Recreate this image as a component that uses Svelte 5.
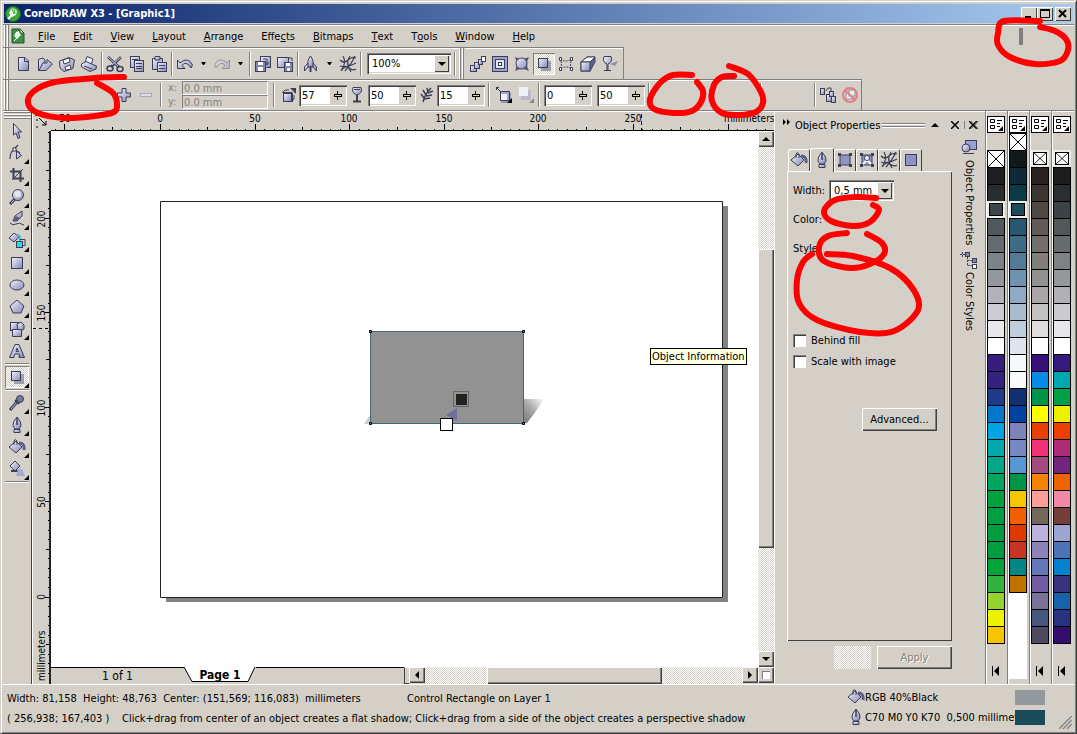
<script>
  // menu labels, split around the underlined access key
  const menus = [
    ['', 'F', 'ile'], ['', 'E', 'dit'], ['', 'V', 'iew'], ['', 'L', 'ayout'],
    ['', 'A', 'rrange'], ['Effe', 'c', 'ts'], ['', 'B', 'itmaps'], ['', 'T', 'ext'],
    ['T', 'o', 'ols'], ['', 'W', 'indow'], ['', 'H', 'elp']
  ];

  const defs = `
    <linearGradient id="steel" x1="0" y1="0" x2="1" y2="1">
      <stop offset="0" stop-color="#f4f5ff"/><stop offset="1" stop-color="#8286b4"/>
    </linearGradient>`;

  const S = 'stroke="#3c3e58" fill="url(#steel)"';
  const L = 'stroke="#3c3e58" fill="none"';

  const nib = `<path d="M9 1 L5.500 6 L5 10 L7 13 H11 L13 10 L12.500 6 Z" ${S}/><path d="M9 2 V9" ${L} stroke-width="1.500"/><path d="M6 13.500 H12 V16.500 H6 Z" ${S}/>`;
  const bucket = `<path d="M1 9 L8 3 L14 9 L8 15 Z" ${S}/><path d="M6 7 V3 Q7 0 9 3 V7" ${L}/><path d="M11 5 Q17 5 16 12" stroke="#5a5e8c" stroke-width="3" fill="none"/>`;
  const mesh = `<path d="M1 5 Q5 9 9 5 T17 3 M1 11 Q8 13 17 8 M2 16 Q6 10 10 13 T17 14 M4 1 Q8 7 2 16 M11 1 Q6 8 12 17 M16 1 Q13 8 6 16" ${L} stroke-width="1.200"/>`;
  const shadow = `<rect x="6" y="6" width="10" height="10" fill="#9d9dab"/><rect x="3.500" y="3.500" width="9" height="9" ${S}/>`;
  const glass = `<path d="M4 1.500 H12 Q14 7 8 9 Q2 7 4 1.500 Z" ${S}/><path d="M5 3.500 H11" ${L}/><path d="M8 9 V15" stroke="#3c3e58" stroke-width="2"/><path d="M4 15.500 H12" stroke="#3c3e58" stroke-width="2"/>`;

  const icons = {
    newDoc: `<path d="M4.500 2.500 H11 L14.500 6 V15.500 H4.500 Z" ${S}/><path d="M10.500 2.500 V6.500 H14.500" ${L}/>`,
    open: `<path d="M2.500 15.500 V4.500 L7 3 L9 5 V15.500 Z" ${S}/><path d="M3 15.500 L7 8 H11 V4.500 L16.500 9 L10 15.500 Z" ${S}/>`,
    save: `<path d="M1.500 6 L11 2.500 L16.500 5 L15 13.500 L6 16.500 L2 13 Z" ${S}/><path d="M5 5 L11 3 L12 7 L6 9 Z M7 12 L12 10 L13 14 L8 15 Z" fill="#fff" stroke="#3c3e58"/>`,
    print: `<path d="M5 8 L7 1.500 L13 4 L11 10 Z" fill="#f5f6ff" stroke="#3c3e58"/><path d="M1.500 9 L6 6.500 L16.500 11 L16 14 L10 16.500 L1.500 12 Z" ${S}/><path d="M4 11 L12 14" ${L}/>`,
    cut: `<path d="M2 2 L13 12 M15 2 L5 12" stroke="#3c3e58" stroke-width="2.500"/><path d="M2 2 L12 11 M15 2 L6 10" stroke="#c6c9e4" stroke-width="1"/><ellipse cx="4" cy="13.500" rx="3" ry="2.500" ${L} stroke-width="1.500"/><ellipse cx="14" cy="14" rx="3" ry="2.500" ${L} stroke-width="1.500"/>`,
    copy: `<rect x="2.500" y="1.500" width="9" height="11" ${S}/><path d="M4 4.500 H10" ${L}/><rect x="6.500" y="5.500" width="9" height="11" ${S}/><path d="M8 8.500 H14 M8 11.500 H14 M8 13.500 H14" ${L}/>`,
    paste: `<path d="M2.500 3.500 H12.500 V14.500 H2.500 Z" ${S}/><path d="M5 1.500 H10 V5 H5 Z" ${S}/><rect x="7.500" y="7.500" width="9" height="9" ${S}/><path d="M9 10.500 H15 M9 13.500 H15" ${L}/>`,
    undo: `<path d="M1.500 5 V13.500 H9 L6 10.500 Q10 5 15 13 L16.500 10 Q12 1 4 8 Z" ${S}/>`,
    redo: `<g opacity=".4"><path d="M16.500 5 V13.500 H9 L12 10.500 Q8 5 3 13 L1.500 10 Q6 1 14 8 Z" ${S}/></g>`,
    import: `<rect x="6.500" y="1.500" width="10" height="11" ${S}/><rect x="1.500" y="6.500" width="10" height="10" fill="#8387ab" stroke="#3c3e58"/><rect x="4" y="7" width="5" height="3" fill="#fff"/><rect x="4" y="12" width="5" height="4" fill="#fff"/><path d="M9 4 H13 V9 M11 7 L13 10 L15 7" ${L}/>`,
    export: `<rect x="1.500" y="2.500" width="11" height="10" ${S}/><rect x="8.500" y="7.500" width="8" height="9" fill="#8387ab" stroke="#3c3e58"/><rect x="10" y="8" width="4" height="3" fill="#fff"/><rect x="11" y="13" width="3" height="3" fill="#fff"/><path d="M12 3 H16 V6" ${L}/>`,
    launch: `<path d="M8.500 1 Q5 5 6 12 H11 Q12 5 8.500 1 Z" ${S}/><path d="M6 8 L2.500 12 V16 L6 12 Z M11 8 L14.500 12 V16 L11 12 Z" ${S}/><path d="M8.500 11 V17" stroke="#3c3e58" stroke-width="2"/>`,
    mesh,
    blend: `<rect x="1.500" y="10.500" width="6" height="6" ${S}/><rect x="5.500" y="7.500" width="5" height="6" ${S}/><rect x="9.500" y="4.500" width="4" height="5" ${S}/><rect x="12.500" y="1.500" width="4" height="5" fill="#fff" stroke="#3c3e58"/>`,
    contour: `<rect x="1.500" y="1.500" width="15" height="15" fill="#9da1c8" stroke="#3c3e58"/><rect x="4.500" y="4.500" width="9" height="9" fill="#dfe1f4" stroke="#3c3e58"/><rect x="7.500" y="7.500" width="3" height="3" fill="#fff" stroke="#3c3e58"/>`,
    distort: `<path d="M2 2 Q9 5 16 2 Q12 9 16 16 Q9 12 2 16 Q5 9 2 2 Z" fill="#50546f"/><circle cx="8.500" cy="8.500" r="5.500" ${S}/>`,
    shadow,
    envelope: `<path d="M3 4 Q9 8 15 4 Q12 9 15 14 Q9 10 3 14 Q6 9 3 4 Z" ${L} stroke-dasharray="2 1"/><path d="M2.500 2.500 h2 v3 h-2 Z M13.500 2.500 h2 v3 h-2 Z M2.500 12.500 h2 v3 h-2 Z M13.500 12.500 h2 v3 h-2 Z" fill="#fff" stroke="#3c3e58"/>`,
    extrude: `<path d="M2 7 L8 2 H16 V7 L11 16 H2 Z" fill="#5e6290" stroke="#3c3e58"/><path d="M2 7 L8 2 H16 L11 7 Z" fill="#fff" stroke="#3c3e58"/><rect x="2" y="7" width="9" height="9" ${S}/>`,
    transparency: `<path d="M9 9 L17 6 L14 11 Z" fill="#8d90a6"/><path d="M3 1.500 H10 Q12 7 7 9 V15.500 H10 H3 H6 V9 Q1 7 3 1.500 Z" ${S}/>`,
    plus: `<path d="M7 2.500 H11 V7 H15.500 V11 H11 V15.500 H7 V11 H2.500 V7 H7 Z" ${S}/>`,
    minus: `<rect x="3.500" y="7.500" width="11" height="3" fill="#dcddea" stroke="#a9aabd"/>`,
    opacity: `<rect x="3.500" y="7.500" width="8" height="8" ${S}/><path d="M2.500 6.500 L5 4 H9 M14 9 V13 L11.500 15.500" ${L}/><path d="M2.500 6.500 H12 M12.500 6.500 V16" ${L}/><path d="M10 2 H16 V8 Z" fill="#3c3e58"/>`,
    glass,
    feather: `<path d="M5 16 Q7 8 13 2 M6 12 L3 8 M8 9 L5 4 M10 6 L9 2 M6 13 L12 12 M8 10 L14 9 M10 7 L15 5" ${L} stroke-width="1.500"/>`,
    direction: `<rect x="6" y="7" width="10" height="10" fill="#9396b6"/><rect x="5.500" y="5.500" width="9" height="9" fill="#a3a7c6" stroke="#3c3e58"/><rect x="6" y="8" width="6" height="6" fill="#f0f1fb"/><path d="M1 1 L5 5 M1.500 4 V1.500 H4" ${L}/><path d="M17 12 V17 H12 Z" fill="#000"/>`,
    edges: `<rect x="2" y="1" width="9" height="9" fill="#eef0fa"/><path d="M11 4 H14 V14 H4 V10 H11 Z" fill="#b9bbcc"/><path d="M17 12 V17 H12 Z" fill="#888"/>`,
    copyFx: `<rect x="1.500" y="2.500" width="4" height="6" ${S}/><rect x="7.500" y="8.500" width="5" height="7" ${S}/><rect x="10.500" y="5.500" width="4" height="5" ${S}/><rect x="12.500" y="10.500" width="4" height="6" ${S}/><path d="M7 5 L9 2 H12 V5" ${L}/>`,
    clearFx: `<rect x="5" y="7" width="6" height="6" fill="#eee" stroke="#8a8ca0"/><rect x="8" y="4" width="6" height="6" fill="#eee" stroke="#8a8ca0"/><circle cx="9" cy="9" r="7" fill="none" stroke="#e57f82" stroke-width="2"/><path d="M4 4 L14 14" stroke="#e57f82" stroke-width="2"/>`,
    pick: `<path d="M5.500 1.500 V13 L8 11 L10 16.500 L12 15.500 L10 10 H13.500 Z" ${S}/>`,
    shape: `<path d="M2 15 Q2 7 7 5 M10 1 L6 5 L12 9" ${L} stroke-width="1.200"/><rect x="5" y="4" width="3" height="3" fill="#fff" stroke="#3c3e58"/><path d="M8.500 7 V15 L13.500 11.500 Z" ${S}/>`,
    crop: `<path d="M5.500 2 V12.500 H16 M2 5.500 H12.500 V16" ${L} stroke-width="2"/><path d="M4 14 L15 3" ${L}/>`,
    zoom: `<path d="M2 16 L7 11" stroke="#3c3e58" stroke-width="3"/><path d="M3 15 L6 12" stroke="#b9bcdd" stroke-width="1"/><circle cx="10" cy="7" r="5.500" ${S}/><circle cx="10" cy="6.500" r="3" fill="#fff" opacity=".6"/>`,
    freehand: `<path d="M5 11 L7 6 L14 1 L14 6 L9 11 Z" ${S}/><path d="M8 6 L12 8 L9 11 L5 11 Z" fill="#5a5e82"/><path d="M2 13 Q5 16 8 14 T16 15" ${L}/>`,
    smartFill: `<path d="M1 6 L6 1 L11 5 L6 10 Z" ${S}/><path d="M9 3 Q13 3 12 10" stroke="#2bc9da" stroke-width="2" fill="none"/><rect x="8.500" y="9.500" width="6" height="6" fill="#27dbe8" stroke="#3c3e58"/><path d="M11.500 7.500 H17 V13.500 H14" ${L}/>`,
    rect: `<rect x="3.500" y="3.500" width="11" height="11" ${S}/>`,
    ellipse: `<ellipse cx="9" cy="9" rx="7" ry="5" ${S}/>`,
    polygon: `<path d="M9 2 L16 8 L13 15 H5 L2 8 Z" ${S}/>`,
    shapes: `<rect x="2.500" y="2.500" width="8" height="8" ${S}/><path d="M9 4 L13 2 L16 5 V9 L13 11 H10 Z" ${S}/><path d="M4.500 9.500 H13.500 V16.500 H4.500 Z" ${S}/>`,
    text: `<path d="M1.500 15.500 L7 2.500 H11 L16.500 15.500 H11 V14 H12 L11 12 H7 L6 14 V15.500 Z M8 9.500 H10.500 L9 6 Z" ${S}/>`,
    dropper: `<path d="M2 16 L9 8" stroke="#3c3e58" stroke-width="3"/><path d="M3 15 L9 8" stroke="#bfc2df" stroke-width="1"/><circle cx="12" cy="5" r="3.500" fill="#777aa2" stroke="#3c3e58"/><path d="M7 6 L11 10" stroke="#3c3e58" stroke-width="2"/>`,
    nib,
    bucket,
    interFill: `<path d="M2 6 L7 1 L12 6 L7 11 Z" ${S}/><path d="M3 11 H10" ${L} stroke-width="2"/><path d="M10 9 L14 9 L17 16 H8 Z" fill="#a7abd2"/>`,
    propRect: `<rect x="4" y="4" width="10" height="10" fill="#8f93c6" stroke="#3c3e58"/><path d="M2 2 h3 v3 h-3 Z M13 2 h3 v3 h-3 Z M2 13 h3 v3 h-3 Z M13 13 h3 v3 h-3 Z" fill="#3c3e58"/>`,
    propCurve: `<rect x="4" y="4" width="10" height="10" fill="#8f93c6" stroke="#3c3e58"/><path d="M9 9 L13 13 M5 13 L9 9" stroke="#fff" stroke-width="2"/><circle cx="9" cy="7" r="2.500" fill="#fff" stroke="#3c3e58"/><path d="M2 2 h3 v3 h-3 Z M13 2 h3 v3 h-3 Z M2 13 h3 v3 h-3 Z M13 13 h3 v3 h-3 Z" fill="#3c3e58"/>`,
    propBox: `<rect x="3.500" y="3.500" width="11" height="11" fill="#8f93c6" stroke="#3c3e58"/>`,
    propSide: `<rect x="5.500" y="1.500" width="11" height="9" fill="#9da1d0" stroke="#3c3e58"/><circle cx="6" cy="9" r="4" ${S}/><path d="M3 14.500 H14" ${L}/>`,
    colorSide: `<path d="M0 3.500 H5 M2.500 1 V6 M7.500 6 V14.500 M7.500 9.500 H12 M7.500 14.500 H12" ${L} stroke-dasharray="2 1"/><rect x="5.500" y="1.500" width="4" height="4" fill="#7f83b4" stroke="#3c3e58"/><rect x="12.500" y="7.500" width="4" height="4" fill="#7f83b4" stroke="#3c3e58"/><rect x="12.500" y="13.500" width="4" height="4" fill="#fff" stroke="#3c3e58"/>`
  };

  const standard = [
    'newDoc', 'open', 'save', 'print', '|', 'cut', 'copy', 'paste', '|', 'undo', 'v', 'redo', 'v', '|',
    'import', 'export', '|', 'launch', 'v', 'mesh', '|'
  ];
  const effects = ['blend', 'contour', 'distort', 'shadow', 'envelope', 'extrude', 'transparency'];

  const tools = [
    'pick', 'shape', 'crop', 'zoom', 'freehand', 'smartFill', 'rect', 'ellipse', 'polygon', 'shapes', 'text',
    '-', 'shadow', '-', 'dropper', 'nib', 'bucket', 'interFill'
  ];
  const noFlyout = ['pick', 'text'];

  const tabs = ['bucket', 'nib', 'propRect', 'propCurve', 'mesh', 'propBox'];

  // 'x' is the empty "no colour" well
  const palettes = [
    { picked: 3, arrow: true, colors: 'x 1c1e20 2a2d30 3b4448 50585c 646c70 7d8287 93969b b0b1b9 cbccd3 e7e8ec fff 361d7e 33227e 1f3b88 0478cc 00a4e4 00a9a9 00a887 00a55f 00a23e 00a040 009d3f 009d3f 00a43a 33b240 93d22f eef200 fac300'.split(' ') },
    { picked: 4, arrow: false, colors: 'x 10191c 0f2a36 0d3a47 1b4a5b 285770 3f6b86 527c96 6f93ae 8eaac5 a7bccd bfcddc dfe5ee f6f9fb f9fbfb 122f72 00429c 7f83bd 7588c2 5896d6 009449 fac600 f25f00 de3a00 c83524 008684 c07100'.split(' ') },
    { picked: 0, arrow: true, colors: 'x 28231f 3b3532 4e4845 625b59 736d6c 817d7a 929190 aba7a6 c3c1c0 dedddb fff 37107a 058ae6 00944a ffff00 e94100 f23077 a24b7c f58200 ff9d98 73675c bcb2dc 8f82ba 6478b9 715ba3 7b7299 47567c 4f4a60'.split(' ') },
    { picked: 0, arrow: true, colors: 'x 1a1c1e 2b2e31 3a4347 50585b 646c6f 7d8287 94979b b0b1b8 cacbd2 e7e7eb fff 36197c 00a8ae 00a144 eef000 eb4000 ae2b79 74237e f06400 f388a7 743e3b 9da5d4 4c73b8 0082ce 36347f 1763ab 293181 340d6e'.split(' ') }
  ];

  // ruler ticks, one every 5 mm
  const MM = 1.892;
  const ticks = (from, to) => {
    const out = [];
    for (let mm = from; mm <= to; mm += 5) {
      out.push({ mm, at: Math.round(mm * MM), len: mm % 50 === 0 ? 7 : mm % 25 === 0 ? 4 : 2 });
    }
    return out;
  };
  const hTicks = ticks(-55, 320);
  const vTicks = ticks(-40, 245);

  // red pen marks
  const marks = [
    [[124, 77], [95, 78], [55, 82], [34, 91], [28, 103], [38, 113], [65, 118], [95, 116], [114, 112], [117, 104], [113, 93], [97, 83]],
    [[692, 75], [673, 75], [660, 83], [650, 99], [654, 109], [674, 113], [692, 111], [701, 102], [703, 91], [697, 82]],
    [[729, 66], [748, 74], [761, 92], [763, 103], [756, 112], [739, 115], [722, 113], [712, 101], [714, 85], [722, 77], [734, 76]],
    [[1040, 21], [1004, 21], [998, 33], [998, 45], [1010, 57], [1035, 64], [1060, 61], [1068, 50], [1066, 39], [1055, 31], [1040, 27]],
    [[876, 198], [857, 197], [835, 200], [824, 211], [831, 221], [853, 226], [870, 222], [879, 210], [873, 205]],
    [[847, 233], [828, 236], [819, 247], [824, 261], [850, 268], [870, 264], [884, 254], [882, 243], [867, 234]],
    [[827, 254], [853, 256], [890, 268], [913, 289], [918, 310], [894, 331], [860, 332], [817, 320], [799, 303], [797, 280], [803, 262], [812, 254]]
  ];

  function smooth(p) {
    let d = `M${p[0]}`;
    for (let i = 0; i < p.length - 1; i++) {
      const a = p[i - 1] ?? p[i], b = p[i], c = p[i + 1], e = p[i + 2] ?? c;
      d += ` C${b[0] + (c[0] - a[0]) / 6} ${b[1] + (c[1] - a[1]) / 6} ${c[0] - (e[0] - b[0]) / 6} ${c[1] - (e[1] - b[1]) / 6} ${c}`;
    }
    return d;
  }

  let zoomLevel = $state('100%');
  let outlineWidth = $state('0,5 mm');
  let activeTab = $state('nib');
  let activeTool = $state('shadow');
  let behindFill = $state(false);
  let scaleWithImage = $state(false);
  let values = $state({ opacity: '57', glass: '50', feather: '15', fade: '0', stretch: '50' });
</script>

{#snippet icon(name)}
  <svg class="icon" width="18" height="18" viewBox="0 0 18 18">{@html icons[name]}</svg>
{/snippet}

{#snippet tri(dir)}
  <svg class="tri" width="8" height="8" viewBox="0 0 8 8">
    <path d={{ down: 'M0 2 H8 L4 6 Z', up: 'M0 6 H8 L4 2 Z', left: 'M6 0 V8 L2 4 Z', right: 'M2 0 V8 L6 4 Z' }[dir]} />
  </svg>
{/snippet}

{#snippet spin(key, label)}
  <div class="spin">
    <input bind:value={values[key]} aria-label={label} />
    <button aria-label="Adjust {label}"><svg width="10" height="11" viewBox="0 0 10 11"><path d="M4 1 H5 V10 H4 Z M1 4 H9 V7 H1 Z" /><path d="M2 5 H8 V6 H2 Z" fill="#d4d0c8" /></svg></button>
  </div>
{/snippet}

<svg class="defs" width="0" height="0">{@html defs}</svg>

<div class="window">
  <header class="titlebar">
    <svg width="16" height="16" viewBox="0 0 16 16"><circle cx="8" cy="8" r="7.500" fill="#3da43a" stroke="#1c6b22" /><path d="M4 7 L6 3 L9 2 L12 5 L11 9 L7 11 Z" fill="#e8f7e0" /><path d="M7 3 L9 8 M9 2 L10 8" stroke="#3da43a" /><path d="M3 13 L8 8" stroke="#fff" stroke-width="2" /></svg>
    <h1>CorelDRAW X3 - [Graphic1]</h1>
    <button aria-label="Minimize"><svg width="10" height="9"><path d="M1 7 H7 V9 H1 Z" /></svg></button>
    <button aria-label="Maximize"><svg width="10" height="9"><path d="M0.500 0.500 H9.500 V8.500 H0.500 Z" fill="none" stroke="#000" /><path d="M0 0 H10 V2 H0 Z" /></svg></button>
    <button class="close" aria-label="Close"><svg width="10" height="9"><path d="M1 1 L8 8 M8 1 L1 8" stroke="#000" stroke-width="2" /></svg></button>
  </header>

  <nav class="menubar">
    <span class="grip"></span>
    <svg width="14" height="16" viewBox="0 0 14 16"><path d="M1 1 H9 L13 5 V15 H1 Z" fill="#3f8f45" stroke="#24562b" /><path d="M3 8 L5 4 L8 3 L10 7 L6 11 Z" fill="#e8f7e0" /><path d="M3 13 L7 9" stroke="#fff" /><path d="M9 1 V5 H13 Z" fill="#fff" stroke="#24562b" /></svg>
    <div class="menus">
      {#each menus as [pre, key, post]}
        <button>{pre}<u>{key}</u>{post}</button>
      {/each}
    </div>
    <span class="stub"></span>
  </nav>

  <div class="toolbar">
    <span class="grip"></span>
    {#each standard as item}
      {#if item === '|'}
        <span class="sep"></span>
      {:else if item === 'v'}
        <button class="drop" aria-label="More"><svg width="5" height="3" viewBox="0 0 5 3"><path d="M0 0 H5 L3 3 H2 Z" /></svg></button>
      {:else}
        <button class="tool" aria-label={item}>{@render icon(item)}</button>
      {/if}
    {/each}
    <div class="combo zoom">
      <select bind:value={zoomLevel} aria-label="Zoom level"><option>100%</option><option>200%</option></select>
      <span class="arrow">{@render tri('down')}</span>
    </div>
    <span class="sep wide"></span>
    <span class="grip"></span>
    {#each effects as item}
      <button class="tool" class:active={item === 'shadow'} aria-label={item}>{@render icon(item)}</button>
    {/each}
  </div>

  <div class="propbar">
    <span class="grip"></span>
    <span class="presets"></span>
    <button class="tool" aria-label="Add preset">{@render icon('plus')}</button>
    <button class="tool" aria-label="Delete preset">{@render icon('minus')}</button>
    <span class="sep wide"></span>
    <div class="offsets">
      <label for="off-x">x:</label><input id="off-x" value="0.0 mm" disabled />
      <label for="off-y">y:</label><input id="off-y" value="0.0 mm" disabled />
    </div>
    <span class="sep wide"></span>
    <span class="tool slim">{@render icon('opacity')}</span>
    {@render spin('opacity', 'Drop shadow opacity')}
    <span class="tool slim">{@render icon('glass')}</span>
    {@render spin('glass', 'Shadow angle')}
    <span class="tool slim">{@render icon('feather')}</span>
    {@render spin('feather', 'Shadow feathering')}
    <span class="sep wide"></span>
    <button class="tool" aria-label="Feathering direction">{@render icon('direction')}</button>
    <button class="tool" aria-label="Feathering edges">{@render icon('edges')}</button>
    <span class="sep"></span>
    <div class="pair">
      {@render spin('fade', 'Shadow fade')}
      {@render spin('stretch', 'Shadow stretch')}
    </div>
    <span class="sep wide"></span>
    <span class="blank"></span>
    <span class="sep"></span>
    <span class="blank short"></span>
    <span class="sep"></span>
    <button class="tool" aria-label="Copy shadow properties">{@render icon('copyFx')}</button>
    <button class="tool" aria-label="Clear drop shadow">{@render icon('clearFx')}</button>
  </div>

  <main>
    <aside class="toolbox">
      <div class="toolgrip"></div>
      {#each tools as item}
        {#if item === '-'}
          <span class="rule"></span>
        {:else}
          <button class:active={activeTool === item} aria-label={item} onclick={() => (activeTool = item)}>
            {@render icon(item)}
            {#if !noFlyout.includes(item)}<i></i>{/if}
          </button>
        {/if}
      {/each}
      <span class="rule"></span>
    </aside>

    <section class="drawing">
      <div class="corner"><svg width="18" height="19"><path d="M6 6 L13 13 M13 9 V13 H9 M2 3 H5 M8 3 H10 M4 1 V4 M4 7 V9 M4 14 V16" stroke="#000" fill="none" /></svg></div>
      <svg class="hruler">
        <g transform="translate(109 0)">
          {#each hTicks as t}
            <path d="M{t.at}.5 19 v-{t.len}" />
            {#if t.len === 7 && t.mm <= 250}<text x={t.at} y="10" text-anchor="middle">{Math.abs(t.mm)}</text>{/if}
          {/each}
          <path d="M481.5 2 V19" stroke-dasharray="4 3" />
          <text x="564" y="10">millimeters</text>
        </g>
      </svg>
      <svg class="vruler">
        <g transform="translate(0 466)">
          {#each vTicks as t}
            <path d="M17 {-t.at}.5 h-{t.len === 2 ? 2 : t.len === 4 ? 4 : 5}" />
            {#if t.len === 7}<text transform="translate(12 {-t.at}) rotate(-90)" text-anchor="middle">{t.mm}</text>{/if}
          {/each}
          <path d="M0 -268.5 H17" stroke-dasharray="3 3" />
          <text transform="translate(12 84) rotate(-90)">millimeters</text>
        </g>
      </svg>

      <div class="canvas">
        <svg class="art">
          <defs>
            <linearGradient id="cast" x1="0" y1="1" x2="1" y2="0"><stop offset="0" stop-color="#777" /><stop offset=".5" stop-color="#aaa" /><stop offset="1" stop-color="#fff" /></linearGradient>
          </defs>
          <g transform="translate(109 70)">
            <path d="M6 5 H568 V401 H6 Z" fill="#808488" />
            <path d="M0.500 0.500 H562.500 V396.500 H0.500 Z" fill="#fff" stroke="#222" />
            <path d="M363 198 H384 Q378 208 367 222 H363 Z" fill="url(#cast)" />
            <path d="M204 223 L210 214 V223 Z" fill="#ccc" />
            <rect x="210.500" y="130.500" width="153" height="92" fill="#929292" stroke="#426778" />
            <path d="M209.500 129.500 h2 v2 h-2 Z M362.500 129.500 h2 v2 h-2 Z M209.500 221.500 h2 v2 h-2 Z M362.500 221.500 h2 v2 h-2 Z" fill="#888" stroke="#000" />
            <rect x="293.500" y="190.500" width="15" height="15" fill="#929292" stroke="#666" />
            <rect x="296" y="193" width="11" height="11" fill="#25221d" />
            <path d="M286 214 L297 207 V220 Z" fill="#70709b" />
            <rect x="280.500" y="217.500" width="12" height="12" fill="#fff" stroke="#000" />
          </g>
        </svg>
        <div class="tooltip" role="tooltip">Object Information</div>
      </div>

      <div class="vscroll">
        <button aria-label="Scroll up">{@render tri('up')}</button>
        <div class="track"><div class="thumb"></div></div>
        <button aria-label="Scroll down">{@render tri('down')}</button>
      </div>

      <div class="pages">
        <span class="count">1 of 1</span>
        <button class="page"><svg width="72" height="16" viewBox="0 0 72 16"><path d="M0 0 L8 14.500 H64 L71 0" fill="#fff" stroke="#000" /></svg><span>Page 1</span></button>
        <span class="tail"></span>
        <span class="split"></span>
        <button class="end" aria-label="Scroll left">{@render tri('left')}</button>
        <div class="track"><div class="thumb"></div></div>
        <button class="end" aria-label="Scroll right">{@render tri('right')}</button>
        <button class="end navigator" aria-label="Navigator"><i></i></button>
      </div>
    </section>

    <aside class="docker">
      <div class="dockhead">
        <svg width="8" height="6"><path d="M0 0 L3 3 L0 6 Z M4 0 L7 3 L4 6 Z" /></svg>
        <h2>Object Properties</h2>
        <span class="bars"></span>
        <button aria-label="Roll up">{@render tri('up')}</button>
        <button class="x" aria-label="Close docker"><svg width="8" height="8"><path d="M0 0 L8 8 M8 0 L0 8" stroke="#000" stroke-width="1.500" /></svg></button>
        <button class="x all" aria-label="Close all dockers"><svg width="10" height="8"><path d="M2 0 L10 8 M10 0 L2 8" stroke="#888" /><path d="M0 0 L8 8 M8 0 L0 8" stroke="#000" stroke-width="1.500" /></svg></button>
      </div>
      <div class="dockbody">
        <div class="sheet">
          <div class="tabs" role="tablist">
            {#each tabs as tab}
              <button role="tab" aria-selected={activeTab === tab} aria-label={tab} class:on={activeTab === tab} onclick={() => (activeTab = tab)}>{@render icon(tab)}</button>
            {/each}
          </div>
          <div class="panel">
            <div class="field">
              <label for="width">Width:</label>
              <div class="combo">
                <select id="width" bind:value={outlineWidth}><option>0,5 mm</option><option>1,0 mm</option></select>
                <span class="arrow">{@render tri('down')}</span>
              </div>
            </div>
            <div class="field">Color:</div>
            <div class="field">Style:</div>
            <div class="checks">
              <label><input type="checkbox" bind:checked={behindFill} />Behind fill</label>
              <label><input type="checkbox" bind:checked={scaleWithImage} />Scale with image</label>
            </div>
            <button class="push advanced">Advanced...</button>
          </div>
          <div class="actions">
            <span class="lock"></span>
            <button class="push" disabled>Apply</button>
          </div>
        </div>
        <div class="sidetabs">
          <button>{@render icon('propSide')}<span>Object Properties</span></button>
          <button>{@render icon('colorSide')}<span>Color Styles</span></button>
        </div>
      </div>
    </aside>

    <aside class="palettes">
      {#each palettes as palette}
        <div class="palette" class:scrolled={!palette.arrow}>
          <button class="flyout" aria-label="Palette menu"><svg width="17" height="17" viewBox="0 0 17 17"><path d="M2.500 3.500 h4 v3 h-4 Z M2.500 9.500 h4 v3 h-4 Z" fill="none" stroke="#000" /><path d="M9 4.500 H14 M9 7.500 H12 M9 10.500 H12" stroke="#000" /><path d="M15 10 V15 H10 Z" /></svg></button>
          <div class="wells">
            {#each palette.colors as color, i}
              <button class:picked={i === palette.picked} aria-label={color === 'x' ? 'No color' : color} style:background-color={color === 'x' ? '#fff' : '#' + color}>
                {#if color === 'x'}<svg viewBox="0 0 16 16" preserveAspectRatio="none"><path d="M0 0 L16 16 M16 0 L0 16" stroke="#000" /></svg>{/if}
              </button>
            {/each}
          </div>
          {#if palette.arrow}
            <button class="more" aria-label="Expand palette"><svg width="8" height="10"><path d="M0 0 H1 V10 H0 Z M7 0 V10 L2 5 Z" /></svg></button>
          {/if}
        </div>
      {/each}
    </aside>
  </main>

  <footer>
    <div class="info">
      <div class="line"><span class="dims">Width: 81,158&nbsp; Height: 48,763&nbsp; Center: (151,569; 116,083)&nbsp; millimeters</span><span>Control Rectangle on Layer 1</span></div>
      <div class="line"><span class="pos">( 256,938; 167,403 )</span><span>Click+drag from center of an object creates a flat shadow; Click+drag from a side of the object creates a perspective shadow</span></div>
    </div>
    <div class="ink">
      <div class="line">{@render icon('bucket')}<span>RGB 40%Black</span><b class="fill"></b></div>
      <div class="line">{@render icon('nib')}<span>C70 M0 Y0 K70&nbsp; 0,500 millimete</span><b class="outline"></b></div>
    </div>
    <svg class="size" width="13" height="13"><path d="M1 13 L13 1 M5 13 L13 5 M9 13 L13 9" stroke="#fff" /><path d="M0 13 L13 0 M4 13 L13 4 M8 13 L13 8" stroke="#808080" stroke-width="1.500" /></svg>
  </footer>

  <svg class="pen">
    {#each marks as mark}
      <path d={smooth(mark)} />
    {/each}
  </svg>
</div>

<style>
  :global(body) {
    background: #d4d0c8;
    overflow: hidden;
  }
  .window, button, input, select {
    font: 11px/13px Tahoma, 'DejaVu Sans Condensed', 'Liberation Sans', sans-serif;
    color: #000;
  }
  .window {
    position: relative;
    display: flex;
    flex-direction: column;
    box-sizing: border-box;
    height: 100vh;
    padding: 2px;
    background: #d4d0c8;
    border: 1px solid #d4d0c8;
    border-right-color: #404040;
    border-bottom-color: #404040;
    box-shadow: inset 1px 1px #fff, inset -1px -1px #808080;
  }
  button {
    padding: 0;
    border: 0;
    background: none;
    display: flex;
    align-items: center;
    justify-content: center;
    flex: none;
  }
  h1, h2 { margin: 0; font-size: 11px; }
  h2 { font-weight: normal; }
  svg { display: block; flex: none; }
  .defs { position: absolute; }

  .titlebar {
    display: flex;
    align-items: center;
    height: 19px;
    margin: 1px 1px 0;
    padding: 0 2px 0 1px;
    background: linear-gradient(90deg, #0a246a, #a6caf0);
    border-bottom: 1px solid #d4d0c8;
  }
  .titlebar h1 { flex: 1; margin-left: 3px; color: #fff; }
  .titlebar button {
    width: 16px;
    height: 14px;
    background: #d4d0c8;
    box-shadow: inset 1px 1px #fff, inset -1px -1px #404040;
  }
  .titlebar .close { margin-left: 2px; }

  .menubar, .toolbar, .propbar {
    display: flex;
    align-items: center;
    border-top: 1px solid #808080;
    box-shadow: inset 0 1px #fff;
    padding-left: 1px;
    box-sizing: border-box;
  }
  .menubar { height: 23px; }
  .toolbar { height: 32px; align-self: flex-start; padding-right: 2px; border-right: 1px solid #808080; }
  .propbar { height: 31px; align-self: flex-start; border-right: 1px solid #808080; }
  .grip {
    flex: none;
    align-self: stretch;
    width: 6px;
    margin-right: 1px;
    background: repeating-linear-gradient(90deg, #fff 0 1px, #808080 1px 2px, #d4d0c8 2px 3px);
  }
  .menus { flex: 1; display: flex; gap: 18px; margin-left: 13px; }
  .stub { width: 4px; height: 17px; margin-right: 51px; background: #808080; }

  .tool { display: flex; align-items: center; justify-content: center; width: 22px; height: 22px; flex: none; }
  .tool.slim { width: 20px; margin-left: 1px; }
  .grip + .tool { margin-left: 1px; }
  .active {
    background: repeating-conic-gradient(#fff 0 25%, #d4d0c8 0 50%) 0 0 / 2px 2px;
    box-shadow: inset 1px 1px #808080, inset -1px -1px #fff;
  }
  .drop { width: 15px; height: 22px; }
  .sep {
    width: 2px;
    height: 24px;
    margin: 0 1px;
    box-sizing: border-box;
    border-left: 1px solid #808080;
    border-right: 1px solid #fff;
    flex: none;
  }
  .sep.wide { margin: 0 3px; }

  .combo {
    display: flex;
    height: 21px;
    box-sizing: border-box;
    padding: 2px;
    background: #fff;
    box-shadow: inset 1px 1px #808080, inset 2px 2px #404040, inset -1px -1px #fff, inset -2px -2px #d4d0c8;
  }
  .combo select { flex: 1; min-width: 0; appearance: none; border: 0; background: none; padding: 0 3px; }
  .arrow {
    display: flex;
    align-items: center;
    justify-content: center;
    width: 15px;
    background: #d4d0c8;
    box-shadow: inset 1px 1px #fff, inset -1px -1px #404040;
  }
  .zoom { width: 84px; margin-left: 4px; }

  .presets { width: 102px; }
  .offsets { display: grid; grid-template-columns: 14px 86px; margin: 0 2px 0 3px; color: #808080; }
  .offsets input {
    width: 86px;
    height: 14px;
    box-sizing: border-box;
    padding: 0 1px;
    border: 1px solid;
    border-color: #808080 #fff #fff #808080;
    background: #d4d0c8;
    color: #808080;
  }
  .spin {
    display: flex;
    width: 48px;
    height: 21px;
    box-sizing: border-box;
    padding: 2px;
    background: #fff;
    box-shadow: inset 1px 1px #808080, inset 2px 2px #404040, inset -1px -1px #fff, inset -2px -2px #d4d0c8;
  }
  .spin input { flex: 1; min-width: 0; border: 0; padding: 0 1px; background: none; }
  .spin button { width: 15px; background: #d4d0c8; }
  .pair { display: flex; gap: 5px; margin-left: 3px; }
  .blank { width: 106px; }
  .blank.short { width: 50px; }

  main {
    flex: 1;
    min-height: 0;
    display: flex;
    border-top: 1px solid #808080;
    box-shadow: inset 0 1px #fff;
  }

  .toolbox { width: 28px; display: flex; flex-direction: column; align-items: center; border-right: 1px solid #404040; }
  .toolgrip { width: 27px; height: 9px; background: repeating-linear-gradient(#fff 0 1px, #808080 1px 2px, #d4d0c8 2px 3px); }
  .toolbox button { position: relative; width: 24px; height: 22px; }
  .toolbox i {
    position: absolute;
    right: 0;
    bottom: 0;
    border-left: 5px solid transparent;
    border-bottom: 5px solid #000;
  }
  .rule { width: 24px; height: 1px; margin: 1px 0; border-top: 1px solid #808080; background: #fff; }

  .drawing {
    flex: 1;
    min-width: 0;
    display: grid;
    grid-template: 19px 1fr 17px / 18px 1fr 16px;
    border-left: 1px solid #fff;
    padding-top: 1px;
  }
  .hruler { grid-column: 2 / 4; width: 100%; height: 19px; border-bottom: 1px solid #000; box-sizing: border-box; overflow: hidden; }
  .vruler { grid-row: 2 / 4; width: 18px; height: 100%; border-right: 2px solid #222; box-sizing: border-box; overflow: hidden; }
  .hruler path, .vruler path { stroke: #000; }
  .hruler text, .vruler text { font-size: 10px; }
  .canvas { position: relative; min-height: 0; overflow: hidden; background: #fff; }
  .art { position: absolute; width: 100%; height: 100%; }
  .tooltip {
    position: absolute;
    left: 599px;
    top: 217px;
    padding: 1px;
    border: 1px solid #000;
    background: #ffffe1;
    white-space: nowrap;
  }
  .vscroll { display: flex; flex-direction: column; }
  .vscroll button, .end {
    width: 16px;
    height: 16px;
    background: #d4d0c8;
    box-shadow: inset 1px 1px #fff, inset -1px -1px #404040, inset -2px -2px #808080;
  }
  .track { flex: 1; display: flex; background: repeating-conic-gradient(#fff 0 25%, #d4d0c8 0 50%) 0 0 / 2px 2px; }
  .thumb { background: #d4d0c8; box-shadow: inset 1px 1px #fff, inset -1px -1px #404040, inset -2px -2px #808080; }
  .vscroll .track { flex-direction: column; }
  .vscroll .track::before { content: ''; flex: 102; }
  .vscroll .track::after { content: ''; flex: 103; }
  .vscroll .thumb { flex: 300; }
  .pages { grid-column: 2 / 4; display: flex; }
  .count { width: 133px; box-sizing: border-box; border-top: 1px solid #000; text-align: center; font-size: 12px; line-height: 16px; }
  .page { display: grid; height: 16px; }
  .page > * { grid-area: 1 / 1; }
  .page span { font-size: 12px; font-weight: bold; line-height: 14px; }
  .tail { width: 148px; border-top: 1px solid #000; }
  .split { width: 5px; border: 1px solid #404040; border-right: 0; border-top-color: #fff; box-sizing: border-box; }
  .pages .track::before { content: ''; flex: 62; }
  .pages .thumb { flex: 175; }
  .pages .track::after { content: ''; flex: 80; }
  .navigator i { width: 8px; height: 8px; background: #fff; box-shadow: inset 1px 1px #808080; }

  .docker { width: 211px; display: flex; flex-direction: column; border-left: 1px solid #fff; box-sizing: border-box; }
  .dockhead { display: flex; align-items: center; height: 28px; padding: 0 7px 0 8px; }
  .dockhead h2 { margin-left: 4px; }
  .dockhead > svg { align-self: flex-start; margin-top: 8px; }
  .bars { flex: 1; height: 4px; margin: 0 3px 0 2px; border: solid #808080; border-width: 1px 0; box-sizing: border-box; box-shadow: 0 1px #fff, inset 0 1px #fff; }
  .dockhead button { width: 13px; }
  .dockhead .x { margin-left: 7px; }
  .dockhead .all { width: 14px; margin-left: 3px; padding-left: 4px; border-left: 1px solid #808080; }
  .dockbody { flex: 1; display: flex; min-height: 0; }
  .sheet { width: 165px; margin: 9px 0 15px 12px; display: flex; flex-direction: column; }
  .tabs { display: flex; align-items: flex-end; margin-left: 1px; }
  .tabs button {
    width: 22px;
    height: 22px;
    border-radius: 2px 2px 0 0;
    box-shadow: inset 1px 1px #fff, inset -1px 0 #404040;
  }
  .tabs .on { position: relative; width: 24px; height: 24px; margin-bottom: -1px; padding-bottom: 1px; background: #d4d0c8; }
  .panel {
    flex: 1;
    padding: 8px 15px 0 6px;
    box-shadow: inset 1px 0 #fff, inset -1px -1px #404040;
    border-top: 1px solid #fff;
  }
  .field { display: flex; align-items: center; height: 21px; margin-bottom: 8px; gap: 4px; }
  .field .combo { width: 65px; }
  .checks { margin-top: 75px; display: flex; flex-direction: column; gap: 8px; }
  .checks label { display: flex; align-items: center; gap: 5px; }
  .checks input {
    appearance: none;
    width: 13px;
    height: 13px;
    margin: 0;
    background: #fff;
    box-shadow: inset 1px 1px #808080, inset 2px 2px #404040, inset -1px -1px #fff;
  }
  .push {
    width: 75px;
    height: 23px;
    background: #d4d0c8;
    box-shadow: inset 1px 1px #fff, inset -1px -1px #404040, inset -2px -2px #808080;
  }
  .push:disabled { color: #808080; text-shadow: 1px 1px #fff; }
  .advanced { margin: 40px 0 0 auto; }
  .actions { display: flex; justify-content: flex-end; gap: 6px; margin-top: 5px; }
  .lock { width: 37px; height: 23px; background: repeating-conic-gradient(#fff 0 25%, #d4d0c8 0 50%) 0 0 / 2px 2px; }
  .sidetabs { width: 20px; margin-left: 7px; }
  .sidetabs button { flex-direction: column; width: 20px; gap: 3px; margin-bottom: 6px; }
  .sidetabs span { writing-mode: vertical-rl; line-height: 16px; }

  .palettes { display: flex; width: 89px; }
  .palette {
    width: 22px;
    box-sizing: border-box;
    padding: 5px 2px 3px 1px;
    border-left: 1px solid #808080;
    box-shadow: inset 1px 0 #fff;
    display: flex;
    flex-direction: column;
  }
  .flyout { width: 18px; height: 17px; background: #fff; box-shadow: inset 0 0 0 1px #000; }
  .wells { margin-top: 17px; border-bottom: 1px solid #000; }
  .scrolled .wells { margin-top: 0; }
  .scrolled::after { content: ''; flex: 1; width: 18px; margin-bottom: 2px; background: #fff; }
  .wells button { width: 18px; height: 17px; border: 1px solid #000; border-bottom: 0; box-sizing: border-box; }
  .wells svg { width: 100%; height: 100%; }
  .wells .picked { border: 2px solid #eeece8; box-shadow: inset 0 0 0 1px #000; }
  .more { width: 18px; height: 20px; margin-top: auto; }

  footer {
    display: flex;
    align-items: flex-start;
    height: 46px;
    border-top: 1px solid #fff;
    padding-left: 4px;
  }
  .info { flex: 1; min-width: 0; padding-top: 3px; }
  .line { display: flex; align-items: center; height: 20px; white-space: nowrap; }
  .dims { width: 400px; }
  .pos { width: 115px; }
  .ink { width: 200px; padding-top: 2px; }
  .ink span { width: 150px; }
  .ink b { width: 30px; height: 15px; }
  .fill { background: #93989c; }
  .outline { background: #1b4a5b; }
  .size { align-self: flex-end; margin: 0 2px 2px 12px; }

  .pen { position: absolute; top: -1px; left: -1px; width: 100vw; height: 100vh; pointer-events: none; }
  .pen path { fill: none; stroke: #f00; stroke-width: 6px; stroke-linecap: round; stroke-linejoin: round; }
</style>
